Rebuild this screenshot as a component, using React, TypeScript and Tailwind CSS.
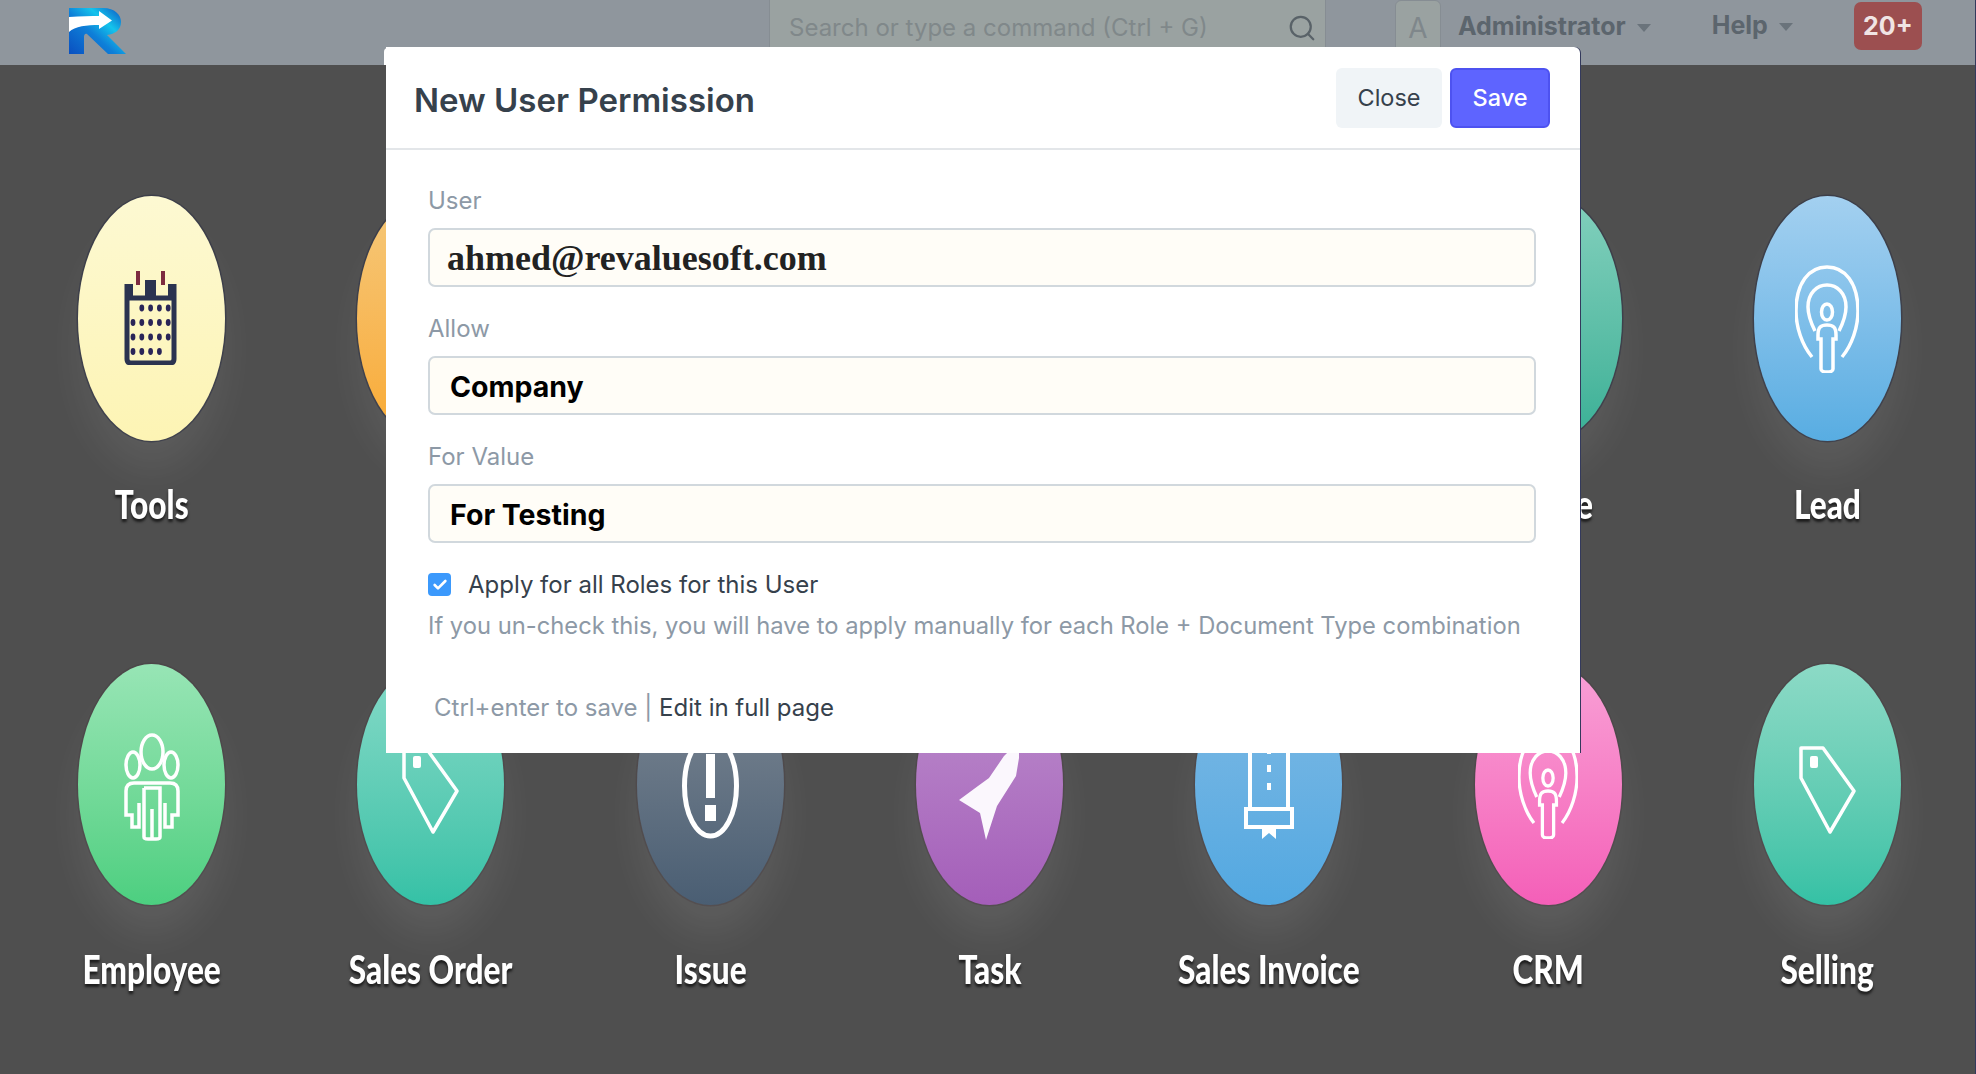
import React from "react";
import { Search, Check } from "lucide-react";

const ns = { vectorEffect: "non-scaling-stroke" as const };

function Calendar() {
  const dots: [number, number][] = [];
  for (let r = 0; r < 4; r++) for (let c = 0; c < 5; c++) {
    if ((r === 0 && c === 0) || (r === 3 && c === 4)) continue;
    dots.push([9 + c * 8.8, 38 + r * 14.5]);
  }
  return (
    <svg viewBox="0 0 53 95" preserveAspectRatio="none" className="w-[53px] h-[95px] mt-[-2px] ml-[-3px]">
      <path d="M3 14V89Q3 93 7 93H46Q50 93 50 89V14" fill="none" stroke="#2b3350" strokeWidth="5" {...ns} />
      <path d="M3 28H50" stroke="#2b3350" strokeWidth="5" {...ns} />
      <path d="M1 14H9V28H1ZM44 14H52V28H44ZM21 10H32V28H21Z" fill="#2b3350" />
      <path d="M14 1V15M39 1V15" stroke="#7d2b3f" strokeWidth="4" {...ns} />
      {dots.map(([x, y], i) => (
        <ellipse key={i} cx={x} cy={y} rx="2.4" ry="3.4" fill="#2a2558" />
      ))}
    </svg>
  );
}
function Broadcast({ size }: { size: string }) {
  return (
    <svg viewBox="0 0 64 108" preserveAspectRatio="none" className={size}>
      <g fill="none" stroke="#fff" strokeWidth="3.5" {...ns}>
        <path d="M17 92C7 80 1 62 1 46C1 18 14 2 32 2C50 2 63 18 63 46C63 62 57 80 47 92" />
        <path d="M20 66C16 58 13 50 13 42C13 28 22 20 32 20C42 20 51 28 51 42C51 50 48 58 44 66" />
        <ellipse cx="32" cy="47" rx="5.5" ry="8" />
        <path d="M23 70C23 62 26 60 32 60C38 60 41 62 41 70V74H38V104Q38 107 32 107Q26 107 26 104V74H23Z" />
      </g>
    </svg>
  );
}
function Tag() {
  return (
    <svg viewBox="0 0 57 90" preserveAspectRatio="none" className="w-[57px] h-[90px] mt-[8px]">
      <path d="M2 4H24L55 47L31 88L2 34Z" fill="none" stroke="#fff" strokeWidth="3.5" strokeLinejoin="round" {...ns} />
      <rect x="11" y="12" width="8" height="12" rx="2" fill="#fff" />
    </svg>
  );
}
function People() {
  return (
    <svg viewBox="0 0 56 108" preserveAspectRatio="none" className="w-[56px] h-[108px] mt-[4px]">
      <g fill="none" stroke="#fff" strokeWidth="3.5" {...ns}>
        <ellipse cx="28" cy="19" rx="11" ry="17" />
        <ellipse cx="9" cy="32" rx="7" ry="13" />
        <ellipse cx="47" cy="32" rx="7" ry="13" />
        <path d="M2 58Q2 50 10 50H46Q54 50 54 58V82H48V94H41V70M2 58V82H8V94H15V70" />
        <path d="M20 55H36V76M20 55V104Q20 106 24 106H32Q36 106 36 104V76M28 76V106" />
      </g>
    </svg>
  );
}
function Issue() {
  return (
    <svg viewBox="0 0 59 108" preserveAspectRatio="none" className="w-[59px] h-[108px] mt-[2px]">
      <ellipse cx="29.5" cy="54" rx="26" ry="50" fill="none" stroke="#fff" strokeWidth="5" {...ns} />
      <rect x="25" y="22" width="9" height="44" fill="#fff" />
      <rect x="24" y="73" width="11" height="16" fill="#fff" />
    </svg>
  );
}
function Rocket() {
  return (
    <svg viewBox="0 0 60 108" preserveAspectRatio="none" className="w-[60px] h-[108px] mt-[4px]">
      <path d="M60 8L60 25L57 43L38 73L27 107L21 80L0 67L19 53L30 45L45 23Z" fill="#fbf7fd" />
    </svg>
  );
}
function Book() {
  return (
    <svg viewBox="0 0 50 108" preserveAspectRatio="none" className="w-[50px] h-[108px] mt-[4px]">
      <g fill="none" stroke="#fff" strokeWidth="4" {...ns}>
        <path d="M6 2H44V76H6Z" />
        <path d="M2 76H48V94H2Z" />
      </g>
      <path d="M18 94H32V106L25 100L18 106Z" fill="#fff" />
      <rect x="23" y="14" width="4" height="7" fill="#fff" />
      <rect x="23" y="32" width="4" height="7" fill="#fff" />
      <rect x="23" y="50" width="4" height="7" fill="#fff" />
    </svg>
  );
}

const tiles = [
  { label: "Tools", bg: "from-[#fdf9d2] to-[#fdf4b4]", icon: <Calendar /> },
  { label: "", bg: "from-[#f5c879] to-[#f9aa30]", icon: null },
  { label: "", bg: "from-[#7bd7c3] to-[#36c2a7]", icon: null },
  { label: "", bg: "from-[#bb8ccb] to-[#a55fba]", icon: null },
  { label: "", bg: "from-[#7bb8e3] to-[#53a8e1]", icon: null },
  { label: "Quote", bg: "from-[#82d0bd] to-[#38b096]", icon: null },
  { label: "Lead", bg: "from-[#a3d0f0] to-[#58ade2]", icon: <Broadcast size="w-[64px] h-[108px]" /> },
  { label: "Employee", bg: "from-[#97e5b5] to-[#4ccf80]", icon: <People /> },
  { label: "Sales Order", bg: "from-[#84dac8] to-[#34c1a6]", icon: <Tag /> },
  { label: "Issue", bg: "from-[#7f8994] to-[#4a5e73]", icon: <Issue /> },
  { label: "Task", bg: "from-[#bd90cd] to-[#a45eb9]", icon: <Rocket /> },
  { label: "Sales Invoice", bg: "from-[#7fbae4] to-[#52a8e1]", icon: <Book /> },
  { label: "CRM", bg: "from-[#f8a0d6] to-[#f45fb8]", icon: <Broadcast size="w-[60px] h-[108px]" /> },
  { label: "Selling", bg: "from-[#8cdac6] to-[#34c1a5]", icon: <Tag /> },
];

function Tile({ t, top }: { t: (typeof tiles)[number]; top: boolean }) {
  return (
    <div className="h-[467px] flex flex-col items-center blur-[0.6px]">
      <div
        className={`w-[147px] rounded-[50%] bg-linear-to-b ${t.bg} flex items-center justify-center ${
          top
            ? "h-[245px] shadow-[0_0_0_1.5px_rgba(48,52,70,0.6),0_30px_36px_rgba(255,255,255,0.07)]"
            : "h-[241px] mt-[1px] shadow-[0_0_0_1.5px_rgba(70,52,60,0.3),0_30px_36px_rgba(255,255,255,0.08)]"
        }`}
      >
        {t.icon}
      </div>
      <div
        className={`${top ? "mt-[35px]" : "mt-[36px]"} h-[56px] leading-[56px] whitespace-nowrap scale-x-[0.79] font-['Lato',sans-serif] font-black text-[40px] text-white [text-shadow:0_3px_3px_rgba(0,0,0,0.65)]`}
      >
        {t.label}
      </div>
    </div>
  );
}

function Field({ label, value, serif }: { label: string; value: string; serif?: boolean }) {
  return (
    <div className="mb-[27px]">
      <div className="h-[30px] leading-[30px] mb-[12px] text-[24px] text-[#8d99a6]">{label}</div>
      <div
        className={
          serif
            ? "h-[59px] rounded-[7px] border-2 border-[#d1d8dd] bg-[#fffdf7] flex items-center pl-[17px] font-['Liberation_Serif',serif] font-bold text-[36px] text-[#222]"
            : "h-[59px] rounded-[7px] border-2 border-[#d1d8dd] bg-[#fffdf7] flex items-center pl-[20px] pt-[3px] font-bold text-[28.5px] text-black"
        }
      >
        {value}
      </div>
    </div>
  );
}

function Caret() {
  return <span className="w-0 h-0 border-x-[7px] border-x-transparent border-t-[8px] border-t-[#6a737b] ml-[11px] mt-[3px]" />;
}

export default function App() {
  return (
    <div className="relative w-[1976px] h-[1074px] overflow-hidden bg-[#4f4f4f] font-['Inter',sans-serif] border-r border-r-[#33395c]">
      <header className="h-[65px] bg-[#8f969d] flex items-start">
        <svg viewBox="0 0 57 46" className="w-[57px] h-[46px] ml-[69px] mt-[8px] shrink-0">
          <defs>
            <linearGradient id="rg" x1="0" y1="1" x2="1" y2="0.1">
              <stop offset="0" stopColor="#0a4fc0" />
              <stop offset="0.45" stopColor="#0e7fd8" />
              <stop offset="0.7" stopColor="#14c4ec" />
              <stop offset="1" stopColor="#0d56c4" />
            </linearGradient>
          </defs>
          <path d="M0 0H34C46 0 52 7 52 14C52 22 46 26 38 27L57 46H39L18 26C16 25 15 27 15 29V46H0Z" fill="url(#rg)" />
          <path d="M0 9C12 8 22 8 30 8V3L43 12.5L30 21V17C18 17 6 18 0 24Z" fill="#fff" />
        </svg>
        <div className="ml-[643px] w-[557px] h-[60px] shrink-0 bg-[#9aa2a1] border-x border-[#868d93] flex items-start justify-between pl-[19px] pr-[8px]">
          <span className="mt-[12px] text-[24px] leading-[32px] text-[#80888a] whitespace-nowrap">Search or type a command (Ctrl + G)</span>
          <Search className="w-[30px] h-[30px] mt-[13px] text-[#596268]" strokeWidth={1.8} />
        </div>
        <div className="ml-[69px] w-[46px] h-[60px] shrink-0 rounded-t-[6px] bg-[#9aa2a1] border border-[#868d93] flex justify-center pt-[9px] text-[28px] leading-[36px] text-[#7f878b]">A</div>
        <div className="ml-[17px] mt-[8px] flex items-center text-[25px] leading-[36px] font-bold text-[#5c656d] whitespace-nowrap">
          Administrator<Caret />
        </div>
        <div className="ml-[61px] mt-[7px] flex items-center text-[25px] leading-[36px] font-bold text-[#5c656d]">
          Help<Caret />
        </div>
        <div className="ml-[61px] mt-[2px] w-[68px] h-[48px] rounded-[7px] bg-[#9c4f50] flex items-center justify-center pt-[1px] text-[25px] font-bold text-[#f0e4e4]">
          20+
        </div>
      </header>

      <main className="grid grid-cols-7 w-[1955px] ml-[12px] pt-[131px]">
        {tiles.map((t, i) => (
          <Tile key={i} t={t} top={i < 7} />
        ))}
      </main>

      <div className="absolute left-[386px] top-[47px] w-[1194px] h-[706px] bg-white rounded-tr-[6px] shadow-[1px_0_0_#33395c] flex flex-col text-[#36414c]">
        <div className="absolute left-[-2px] top-[1px] w-[4px] h-[17px] bg-white rounded-tl-[5px]" />
        <div className="h-[101px] shrink-0 border-b-2 border-[#e3e6e9] box-content flex items-center justify-between pl-[28px] pr-[30px]">
          <h1 className="text-[33px] font-semibold text-[#36414c] whitespace-nowrap mt-[7px]">New User Permission</h1>
          <div className="flex gap-[8px]">
            <button className="w-[106px] h-[60px] rounded-[6px] bg-[#f0f4f7] text-[23.5px] text-[#36414c]">Close</button>
            <button className="w-[100px] h-[60px] rounded-[6px] bg-[#5e64ff] border-2 border-[#4d52f0] text-[23.5px] font-medium text-white">Save</button>
          </div>
        </div>
        <div className="pl-[42px] pr-[44px] pt-[36px]">
          <Field label="User" value="ahmed@revaluesoft.com" serif />
          <Field label="Allow" value="Company" />
          <Field label="For Value" value="For Testing" />
          <div className="flex items-center h-[23px] mt-[30px]">
            <span className="w-[23px] h-[23px] rounded-[4px] bg-[#3b99fc] flex items-center justify-center">
              <Check className="w-[16px] h-[16px] text-white" strokeWidth={4} />
            </span>
            <span className="ml-[17px] text-[24px] text-[#36414c] whitespace-nowrap">Apply for all Roles for this User</span>
          </div>
          <p className="mt-[15px] h-[30px] leading-[30px] text-[23.75px] text-[#8d99a6] whitespace-nowrap">
            If you un-check this, you will have to apply manually for each Role + Document Type combination
          </p>
          <div className="mt-[52px] ml-[6px] h-[30px] leading-[30px] text-[24px] text-[#8d99a6] whitespace-nowrap">
            Ctrl+enter to save | <span className="text-[#36414c]">Edit in full page</span>
          </div>
        </div>
      </div>
    </div>
  );
}
